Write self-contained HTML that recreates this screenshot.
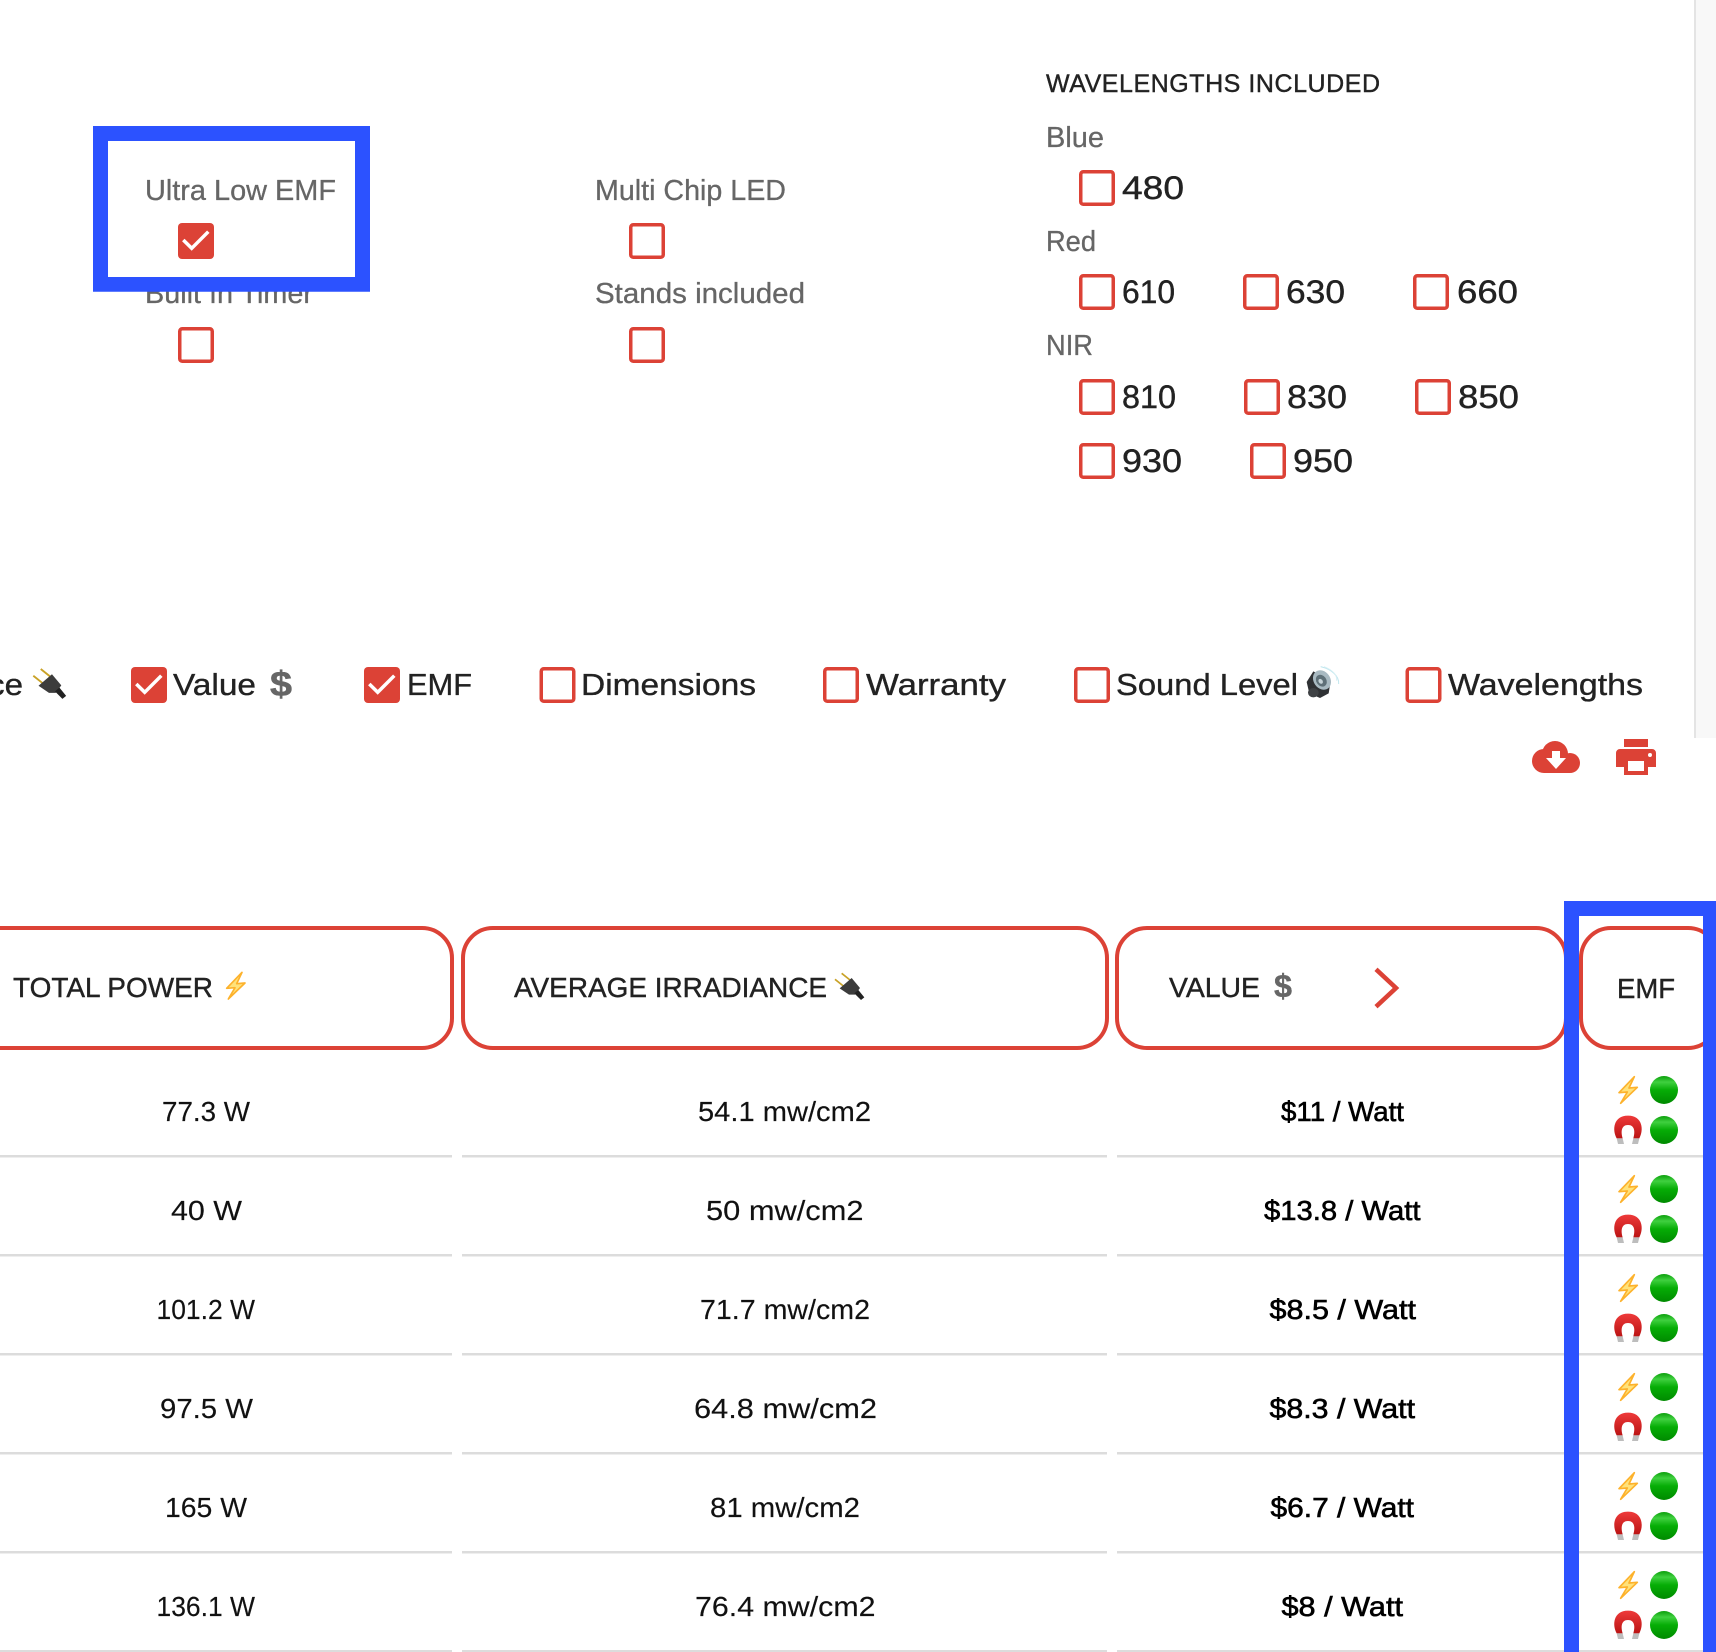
<!DOCTYPE html>
<html><head><meta charset="utf-8"><title>Comparison</title>
<style>
html,body{margin:0;padding:0;background:#fff}
svg{display:block}
text{font-family:"Liberation Sans",sans-serif}
.l{font-size:29px;fill:#666;stroke:#666;stroke-width:.3px}
.n{font-size:32px;fill:#222;stroke:#222;stroke-width:.4px}
.c{font-size:31px;fill:#222;stroke:#222;stroke-width:.35px}
.h{font-size:28px;fill:#222;stroke:#222;stroke-width:.4px}
.r{font-size:28px;fill:#111;stroke:#111;stroke-width:.15px}
.b{font-size:28px;fill:#000;stroke:#000;stroke-width:.6px}
.d{font-weight:bold;fill:#666}
.cb{fill:#fff;stroke:#dc4236;stroke-width:3.5}
.ck{fill:#dc4236}
.m{fill:none;stroke:#fff;stroke-width:3.5}
.hd{fill:none;stroke:#dc4236;stroke-width:4}
.ln{fill:#dcdcdc}
.blt{fill:#ffe27a;stroke:#fdb22c;stroke-width:5;stroke-linejoin:round}
.gc{fill:url(#g)}
</style></head><body>
<svg width="1716" height="1652" viewBox="0 0 1716 1652" xmlns="http://www.w3.org/2000/svg">
<defs>
<linearGradient id="g" x1="0" y1="0" x2="0" y2="1"><stop offset="0" stop-color="#0b9f0b"/><stop offset=".22" stop-color="#3fd03f"/><stop offset=".5" stop-color="#06ad06"/><stop offset="1" stop-color="#008a00"/></linearGradient>
<linearGradient id="mg" x1="0" y1="0" x2="0" y2="1"><stop offset="0" stop-color="#ee3a3a"/><stop offset="1" stop-color="#bb1414"/></linearGradient>
</defs>
<rect width="1716" height="1652" fill="#fff"/>
<rect x="1694" y="0" width="22" height="738" fill="#f8f8f8"/>
<rect x="1694" y="0" width="2" height="738" fill="#e4e4e4"/>

<text class="l" x="145" y="200" textLength="191" lengthAdjust="spacingAndGlyphs">Ultra Low EMF</text>
<rect class="ck" x="178" y="223" width="36" height="36" rx="4"/>
<path class="m" d="M183.300 240L191.700 248.300L208.300 231.700"/>
<text class="l" x="145" y="303" textLength="168" lengthAdjust="spacingAndGlyphs">Built In Timer</text>
<rect class="cb" x="179.750" y="328.750" width="32.500" height="32.500" rx="2.500"/>

<text class="l" x="595" y="200" textLength="191" lengthAdjust="spacingAndGlyphs">Multi Chip LED</text>
<rect class="cb" x="630.750" y="224.750" width="32.500" height="32.500" rx="2.500"/>
<text class="l" x="595" y="303" textLength="210" lengthAdjust="spacingAndGlyphs">Stands included</text>
<rect class="cb" x="630.750" y="328.750" width="32.500" height="32.500" rx="2.500"/>

<text x="1046" y="92" font-size="25" fill="#222" stroke="#222" stroke-width=".4" textLength="334" lengthAdjust="spacing">WAVELENGTHS INCLUDED</text>
<text class="l" x="1046" y="147" textLength="58" lengthAdjust="spacingAndGlyphs">Blue</text>
<rect class="cb" x="1080.750" y="171.750" width="32.500" height="32.500" rx="2.500"/>
<text class="n" x="1122" y="199" textLength="62" lengthAdjust="spacingAndGlyphs">480</text>
<text class="l" x="1046" y="251" textLength="50" lengthAdjust="spacingAndGlyphs">Red</text>
<rect class="cb" x="1080.750" y="275.750" width="32.500" height="32.500" rx="2.500"/>
<text class="n" x="1122" y="303" textLength="53" lengthAdjust="spacingAndGlyphs">610</text>
<rect class="cb" x="1244.750" y="275.750" width="32.500" height="32.500" rx="2.500"/>
<text class="n" x="1286" y="303" textLength="59" lengthAdjust="spacingAndGlyphs">630</text>
<rect class="cb" x="1414.750" y="275.750" width="32.500" height="32.500" rx="2.500"/>
<text class="n" x="1457" y="303" textLength="61" lengthAdjust="spacingAndGlyphs">660</text>
<text class="l" x="1046" y="355" textLength="47" lengthAdjust="spacingAndGlyphs">NIR</text>
<rect class="cb" x="1080.750" y="380.750" width="32.500" height="32.500" rx="2.500"/>
<text class="n" x="1122" y="408" textLength="54" lengthAdjust="spacingAndGlyphs">810</text>
<rect class="cb" x="1245.750" y="380.750" width="32.500" height="32.500" rx="2.500"/>
<text class="n" x="1287" y="408" textLength="60" lengthAdjust="spacingAndGlyphs">830</text>
<rect class="cb" x="1416.750" y="380.750" width="32.500" height="32.500" rx="2.500"/>
<text class="n" x="1458" y="408" textLength="61" lengthAdjust="spacingAndGlyphs">850</text>
<rect class="cb" x="1080.750" y="444.750" width="32.500" height="32.500" rx="2.500"/>
<text class="n" x="1122" y="472" textLength="60" lengthAdjust="spacingAndGlyphs">930</text>
<rect class="cb" x="1251.750" y="444.750" width="32.500" height="32.500" rx="2.500"/>
<text class="n" x="1293" y="472" textLength="60" lengthAdjust="spacingAndGlyphs">950</text>

<text class="c" x="-12" y="695" textLength="35" lengthAdjust="spacingAndGlyphs">ce</text>
<g transform="translate(33.300,669) scale(.3733) translate(-30,-40)">
<path d="M30 58L55 78M50 40L75 60" stroke="#c9a227" stroke-width="5" fill="none"/>
<path d="M44 85L80 54L105 84L90 104L72 104Z" fill="#3c3c3c"/>
<path d="M88 100L100 90L118 112L108 120Z" fill="#222"/>
</g>
<rect class="ck" x="131" y="667" width="36" height="36" rx="4"/>
<path class="m" d="M136.300 684L144.700 692.300L161.300 675.700"/>
<text class="c" x="173" y="695" textLength="83" lengthAdjust="spacingAndGlyphs">Value</text>
<text class="d" x="270" y="696" font-size="35" textLength="22" lengthAdjust="spacingAndGlyphs" stroke="#666" stroke-width=".5">$</text>
<rect class="ck" x="364" y="667" width="36" height="36" rx="4"/>
<path class="m" d="M369.300 684L377.700 692.300L394.300 675.700"/>
<text class="c" x="407" y="695" textLength="65" lengthAdjust="spacingAndGlyphs">EMF</text>
<rect class="cb" x="541.250" y="668.750" width="32.500" height="32.500" rx="2.500"/>
<text class="c" x="581" y="695" textLength="175" lengthAdjust="spacingAndGlyphs">Dimensions</text>
<rect class="cb" x="824.750" y="668.750" width="32.500" height="32.500" rx="2.500"/>
<text class="c" x="866" y="695" textLength="140" lengthAdjust="spacingAndGlyphs">Warranty</text>
<rect class="cb" x="1075.750" y="668.750" width="32.500" height="32.500" rx="2.500"/>
<text class="c" x="1116" y="695" textLength="182" lengthAdjust="spacingAndGlyphs">Sound Level</text>
<g transform="translate(1290,660) scale(.3333)">
<path d="M92 20C125 28 148 48 146 72" fill="none" stroke="#bfe6ee" stroke-width="3"/>
<path d="M102 20C128 30 142 45 140 62" fill="none" stroke="#d6eff4" stroke-width="3"/>
<path d="M70 34L122 62L116 100L90 114L58 100L50 66Z" fill="#2f3134"/>
<ellipse cx="96" cy="60" rx="25" ry="31" transform="rotate(-35 96 60)" fill="#a9bac2"/>
<ellipse cx="94" cy="62" rx="15" ry="19" transform="rotate(-35 94 62)" fill="#5f7078"/>
<ellipse cx="92" cy="64" rx="6" ry="8" transform="rotate(-35 92 64)" fill="#c6d3d8"/>
<ellipse cx="70" cy="98" rx="16" ry="14" fill="#3e4144"/>
</g>
<rect class="cb" x="1407.250" y="668.750" width="32.500" height="32.500" rx="2.500"/>
<text class="c" x="1448" y="695" textLength="195" lengthAdjust="spacingAndGlyphs">Wavelengths</text>

<g fill="#dc4236">
<circle cx="1544" cy="761" r="12"/><circle cx="1555" cy="754" r="13"/><circle cx="1570" cy="763" r="10"/>
<rect x="1544" y="758" width="26" height="15"/>
</g>
<path d="M1552 751H1560V758H1566L1556 769L1546 758H1552Z" fill="#fff"/>
<g fill="#dc4236">
<rect x="1624" y="739" width="24" height="8"/>
<path d="M1620 749H1652A4 4 0 0 1 1656 753V767H1648V775H1624V767H1616V753A4 4 0 0 1 1620 749Z"/>
</g>
<rect x="1628" y="761" width="16" height="10" fill="#fff"/>
<circle cx="1650" cy="755" r="2" fill="#fff"/>

<rect class="hd" x="-40" y="928" width="492" height="120" rx="30"/>
<rect class="hd" x="463" y="928" width="644" height="120" rx="30"/>
<rect class="hd" x="1117" y="928" width="449" height="120" rx="30"/>
<rect class="hd" x="1581" y="928" width="137" height="120" rx="30"/>
<text class="h" x="13" y="997" textLength="200" lengthAdjust="spacingAndGlyphs">TOTAL POWER</text>
<g transform="translate(207.670,965.670) scale(.3333)"><path class="blt" d="M103 20L57 68L82 66L62 100L112 52L87 54Z"/></g>
<text class="h" x="514" y="997" textLength="313" lengthAdjust="spacingAndGlyphs">AVERAGE IRRADIANCE</text>
<g transform="translate(825,960) scale(.3333)">
<path d="M30 58L55 78M50 40L75 60" stroke="#c9a227" stroke-width="5" fill="none"/>
<path d="M44 85L80 54L105 84L90 104L72 104Z" fill="#3c3c3c"/>
<path d="M88 100L100 90L118 112L108 120Z" fill="#222"/>
</g>
<text class="h" x="1169" y="997" textLength="91" lengthAdjust="spacingAndGlyphs">VALUE</text>
<text class="d" x="1274" y="997" font-size="32" textLength="18" lengthAdjust="spacingAndGlyphs" stroke="#666" stroke-width=".4">$</text>
<path d="M1376 969.300L1396 988L1376 1006.700" fill="none" stroke="#dc4236" stroke-width="4.500"/>
<text class="h" x="1617" y="998" textLength="58" lengthAdjust="spacingAndGlyphs">EMF</text>

<text class="r" x="162" y="1121" textLength="88" lengthAdjust="spacingAndGlyphs">77.3 W</text>
<text class="r" x="698" y="1121" textLength="173" lengthAdjust="spacingAndGlyphs">54.1 mw/cm2</text>
<text class="b" x="1281" y="1121" textLength="123" lengthAdjust="spacingAndGlyphs">$11 / Watt</text>
<rect class="ln" x="0" y="1155" width="452" height="2.500"/><rect class="ln" x="462" y="1155" width="645" height="2.500"/><rect class="ln" x="1117" y="1155" width="586" height="2.500"/>

<text class="r" x="171" y="1220" textLength="71" lengthAdjust="spacingAndGlyphs">40 W</text>
<text class="r" x="706" y="1220" textLength="157.500" lengthAdjust="spacingAndGlyphs">50 mw/cm2</text>
<text class="b" x="1264" y="1220" textLength="156.500" lengthAdjust="spacingAndGlyphs">$13.8 / Watt</text>
<rect class="ln" x="0" y="1254" width="452" height="2.500"/><rect class="ln" x="462" y="1254" width="645" height="2.500"/><rect class="ln" x="1117" y="1254" width="586" height="2.500"/>

<text class="r" x="156.500" y="1319" textLength="98.500" lengthAdjust="spacingAndGlyphs">101.2 W</text>
<text class="r" x="700" y="1319" textLength="170" lengthAdjust="spacingAndGlyphs">71.7 mw/cm2</text>
<text class="b" x="1269.500" y="1319" textLength="146.500" lengthAdjust="spacingAndGlyphs">$8.5 / Watt</text>
<rect class="ln" x="0" y="1353" width="452" height="2.500"/><rect class="ln" x="462" y="1353" width="645" height="2.500"/><rect class="ln" x="1117" y="1353" width="586" height="2.500"/>

<text class="r" x="160" y="1418" textLength="93" lengthAdjust="spacingAndGlyphs">97.5 W</text>
<text class="r" x="694" y="1418" textLength="183" lengthAdjust="spacingAndGlyphs">64.8 mw/cm2</text>
<text class="b" x="1269.500" y="1418" textLength="145.500" lengthAdjust="spacingAndGlyphs">$8.3 / Watt</text>
<rect class="ln" x="0" y="1452" width="452" height="2.500"/><rect class="ln" x="462" y="1452" width="645" height="2.500"/><rect class="ln" x="1117" y="1452" width="586" height="2.500"/>

<text class="r" x="165" y="1517" textLength="82" lengthAdjust="spacingAndGlyphs">165 W</text>
<text class="r" x="710" y="1517" textLength="150" lengthAdjust="spacingAndGlyphs">81 mw/cm2</text>
<text class="b" x="1270.500" y="1517" textLength="143.500" lengthAdjust="spacingAndGlyphs">$6.7 / Watt</text>
<rect class="ln" x="0" y="1551" width="452" height="2.500"/><rect class="ln" x="462" y="1551" width="645" height="2.500"/><rect class="ln" x="1117" y="1551" width="586" height="2.500"/>

<text class="r" x="156.500" y="1616" textLength="98.500" lengthAdjust="spacingAndGlyphs">136.1 W</text>
<text class="r" x="695" y="1616" textLength="180.500" lengthAdjust="spacingAndGlyphs">76.4 mw/cm2</text>
<text class="b" x="1281.500" y="1616" textLength="121.500" lengthAdjust="spacingAndGlyphs">$8 / Watt</text>
<rect class="ln" x="0" y="1650" width="452" height="2"/><rect class="ln" x="462" y="1650" width="645" height="2"/><rect class="ln" x="1117" y="1650" width="586" height="2"/>

<g transform="translate(0,0)">
<path class="blt" transform="translate(1600,1070) scale(.3333)" d="M103 20L57 68L82 66L62 100L112 52L87 54Z"/>
<circle class="gc" cx="1664" cy="1090" r="14"/><circle class="gc" cx="1664" cy="1130" r="14"/>
<g transform="translate(1600,1070) scale(.3333)"><path fill="url(#mg)" d="M50 205C36 180 40 137 84 137C128 137 132 180 118 205H100C106 185 104 165 84 165C64 165 62 185 68 205Z"/><path fill="#bdbdbd" d="M50 205H68L72 222H54ZM100 205H118L114 222H96Z"/></g>
</g>
<g transform="translate(0,99)">
<path class="blt" transform="translate(1600,1070) scale(.3333)" d="M103 20L57 68L82 66L62 100L112 52L87 54Z"/>
<circle class="gc" cx="1664" cy="1090" r="14"/><circle class="gc" cx="1664" cy="1130" r="14"/>
<g transform="translate(1600,1070) scale(.3333)"><path fill="url(#mg)" d="M50 205C36 180 40 137 84 137C128 137 132 180 118 205H100C106 185 104 165 84 165C64 165 62 185 68 205Z"/><path fill="#bdbdbd" d="M50 205H68L72 222H54ZM100 205H118L114 222H96Z"/></g>
</g>
<g transform="translate(0,198)">
<path class="blt" transform="translate(1600,1070) scale(.3333)" d="M103 20L57 68L82 66L62 100L112 52L87 54Z"/>
<circle class="gc" cx="1664" cy="1090" r="14"/><circle class="gc" cx="1664" cy="1130" r="14"/>
<g transform="translate(1600,1070) scale(.3333)"><path fill="url(#mg)" d="M50 205C36 180 40 137 84 137C128 137 132 180 118 205H100C106 185 104 165 84 165C64 165 62 185 68 205Z"/><path fill="#bdbdbd" d="M50 205H68L72 222H54ZM100 205H118L114 222H96Z"/></g>
</g>
<g transform="translate(0,297)">
<path class="blt" transform="translate(1600,1070) scale(.3333)" d="M103 20L57 68L82 66L62 100L112 52L87 54Z"/>
<circle class="gc" cx="1664" cy="1090" r="14"/><circle class="gc" cx="1664" cy="1130" r="14"/>
<g transform="translate(1600,1070) scale(.3333)"><path fill="url(#mg)" d="M50 205C36 180 40 137 84 137C128 137 132 180 118 205H100C106 185 104 165 84 165C64 165 62 185 68 205Z"/><path fill="#bdbdbd" d="M50 205H68L72 222H54ZM100 205H118L114 222H96Z"/></g>
</g>
<g transform="translate(0,396)">
<path class="blt" transform="translate(1600,1070) scale(.3333)" d="M103 20L57 68L82 66L62 100L112 52L87 54Z"/>
<circle class="gc" cx="1664" cy="1090" r="14"/><circle class="gc" cx="1664" cy="1130" r="14"/>
<g transform="translate(1600,1070) scale(.3333)"><path fill="url(#mg)" d="M50 205C36 180 40 137 84 137C128 137 132 180 118 205H100C106 185 104 165 84 165C64 165 62 185 68 205Z"/><path fill="#bdbdbd" d="M50 205H68L72 222H54ZM100 205H118L114 222H96Z"/></g>
</g>
<g transform="translate(0,495)">
<path class="blt" transform="translate(1600,1070) scale(.3333)" d="M103 20L57 68L82 66L62 100L112 52L87 54Z"/>
<circle class="gc" cx="1664" cy="1090" r="14"/><circle class="gc" cx="1664" cy="1130" r="14"/>
<g transform="translate(1600,1070) scale(.3333)"><path fill="url(#mg)" d="M50 205C36 180 40 137 84 137C128 137 132 180 118 205H100C106 185 104 165 84 165C64 165 62 185 68 205Z"/><path fill="#bdbdbd" d="M50 205H68L72 222H54ZM100 205H118L114 222H96Z"/></g>
</g>

<path fill="#2c52ff" fill-rule="evenodd" d="M93 126H370V291.700H93ZM108 141V277H355V141Z"/>
<path fill="#2c52ff" d="M1564 901H1716V1652H1703V916H1579V1652H1564Z"/>
</svg>
</body></html>
